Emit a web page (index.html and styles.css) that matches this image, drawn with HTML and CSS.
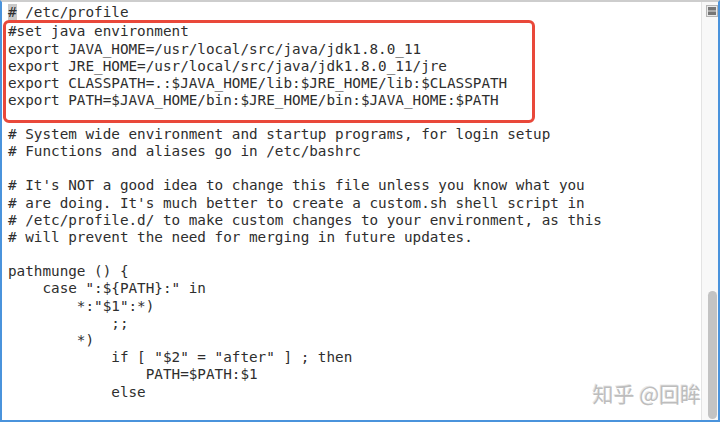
FILE: index.html
```html
<!DOCTYPE html>
<html lang="zh">
<head>
<meta charset="utf-8">
<title>/etc/profile</title>
<link rel="stylesheet" href="styles.css">
</head>
<body>
<div class="window">
  <div class="editor">
    <div class="code">
      <div class="line"><span class="cursor">#</span> /etc/profile</div>
      <div class="mark">
        <div class="line">#set java environment</div>
        <div class="line">export JAVA_HOME=/usr/local/src/java/jdk1.8.0_11</div>
        <div class="line">export JRE_HOME=/usr/local/src/java/jdk1.8.0_11/jre</div>
        <div class="line">export CLASSPATH=.:$JAVA_HOME/lib:$JRE_HOME/lib:$CLASSPATH</div>
        <div class="line">export PATH=$JAVA_HOME/bin:$JRE_HOME/bin:$JAVA_HOME:$PATH</div>
      </div>
      <div class="line"># System wide environment and startup programs, for login setup</div>
      <div class="line"># Functions and aliases go in /etc/bashrc</div>
      <div class="line"> </div>
      <div class="line"># It's NOT a good idea to change this file unless you know what you</div>
      <div class="line"># are doing. It's much better to create a custom.sh shell script in</div>
      <div class="line"># /etc/profile.d/ to make custom changes to your environment, as this</div>
      <div class="line"># will prevent the need for merging in future updates.</div>
      <div class="line"> </div>
      <div class="line">pathmunge () {</div>
      <div class="line">    case ":${PATH}:" in</div>
      <div class="line">        *:"$1":*)</div>
      <div class="line">            ;;</div>
      <div class="line">        *)</div>
      <div class="line">            if [ "$2" = "after" ] ; then</div>
      <div class="line">                PATH=$PATH:$1</div>
      <div class="line">            else</div>
    </div>
    <div class="watermark">知乎 @回眸</div>
  </div>
  <div class="scrollbar">
    <svg class="split" width="12" height="12" viewBox="0 0 12 12">
      <rect x="0.5" y="0.5" width="11" height="11" fill="#e9e9e9" stroke="#b5b5b5"/>
      <rect x="2" y="2" width="8" height="8" fill="#767676"/>
      <rect x="2" y="5.5" width="8" height="1" fill="#e0e0e0"/>
    </svg>
    <div class="thumb"></div>
  </div>
</div>
</body>
</html>
```

FILE: styles.css
```css
html, body {
  margin: 0;
  padding: 0;
  background: #ffffff;
}

.window {
  box-sizing: border-box;
  width: 720px;
  height: 422px;
  display: flex;
  border-top: 2px solid #cdcdcd;
  border-left: 2px solid #4a93dc;
  border-right: 2px solid #4a93dc;
  border-bottom: 2px solid #4a93dc;
  background: #ffffff;
  overflow: hidden;
}

.editor {
  position: relative;
  flex: 1;
  padding: 2.45px 0 0 6px;
  overflow: hidden;
}

.code {
  font-family: "DejaVu Sans Mono", "Liberation Mono", monospace;
  font-size: 14.3px;
  line-height: 17.2px;
  color: #2e2e2e;
}

.line {
  white-space: pre;
  height: 17.2px;
}

.cursor {
  background: #c9c9c9;
}

.mark {
  margin: -1.15px 0 2.85px -5px;
  width: 524px;
  padding: 0 0 10.5px 2px;
  border: 3px solid #e9483a;
  border-radius: 6px;
}

.watermark {
  position: absolute;
  right: 0;
  top: 379px;
  font-family: "Noto Sans CJK SC", "Noto Sans", sans-serif;
  font-size: 21px;
  line-height: 24px;
  color: #bdbdbd;
  text-shadow: 1px 1px 0 rgba(255, 255, 255, 0.9), -1px -1px 0 rgba(160, 160, 160, 0.25);
  white-space: nowrap;
}

.scrollbar {
  position: relative;
  width: 16px;
  background: #f8f8f8;
  border-left: 1px solid #e3e3e3;
  display: flex;
  flex-direction: column;
  align-items: flex-end;
}

.split {
  display: block;
  margin: 3px 0 0 0;
}

.thumb {
  margin-top: auto;
  margin-right: 1px;
  margin-bottom: 1px;
  width: 9.5px;
  height: 128px;
  border-radius: 5px;
  background: #c3c3c3;
}
```
